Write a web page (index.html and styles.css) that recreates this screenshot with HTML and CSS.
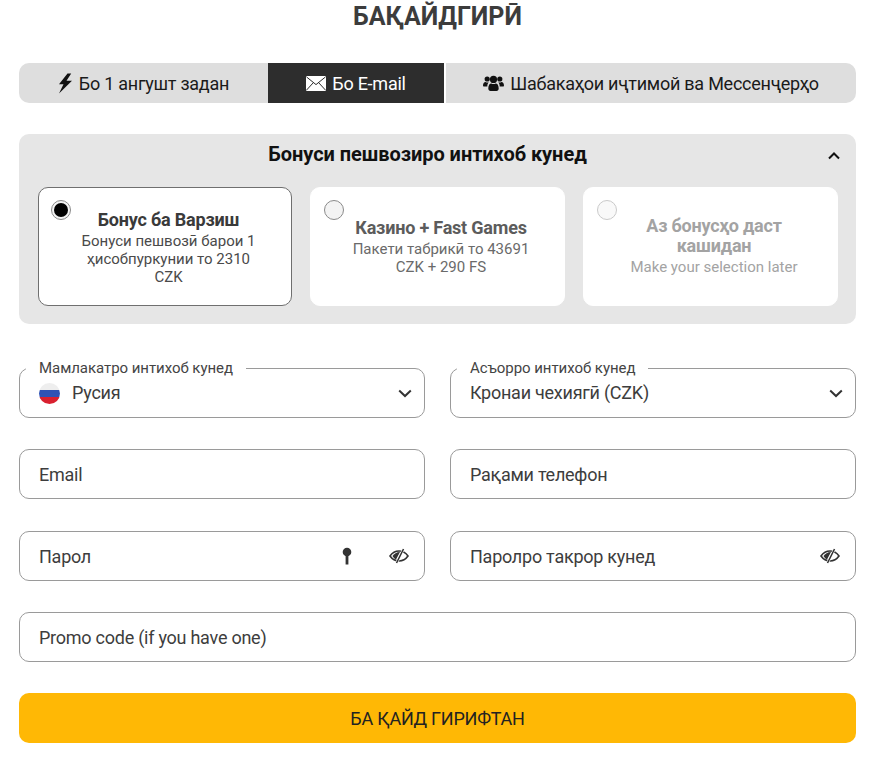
FILE: index.html
```html
<!DOCTYPE html>
<html lang="tg">
<head>
<meta charset="utf-8">
<title>Бақайдгирӣ</title>
<link rel="stylesheet" href="styles.css">
</head>
<body>
<main class="page">
  <h1 class="title">БАҚАЙДГИРӢ</h1>
  <nav class="tabs">
    <div class="tab tab-one">
      <svg class="ico" width="15" height="21" viewBox="0 0 15 21"><path fill="#111" d="M9.500 0.500 1 11.200h4.500L1 20.500 14 7.800H8.500l4.700-7.300z"/></svg>
      <span>Бо 1 ангушт задан</span>
    </div>
    <div class="tab tab-mail">
      <svg class="ico" width="20" height="15" viewBox="0 0 20 15"><rect width="20" height="15" rx="1.2" fill="#fff"/><path d="M.6 1 10 8.6 19.4 1M.6 14 7.4 6.6M19.4 14 12.6 6.6" fill="none" stroke="#2d2d2d" stroke-width="1"/></svg>
      <span>Бо E-mail</span>
    </div>
    <div class="tab tab-social">
      <svg class="ico" width="21" height="17" viewBox="0 0 21 17"><g fill="#111"><circle cx="4.2" cy="4" r="2.6"/><circle cx="16.8" cy="4" r="2.6"/><circle cx="10.5" cy="4.4" r="3.6"/><path d="M0 11c0-2.6 1-4 2.6-4 1 .6 2.2.6 3.2.3-.9 1-1.500 2.200-1.500 4.200H.8c-.5 0-.8-.2-.8-.5zM21 11c0-2.600-1-4-2.600-4-1 .6-2.200.6-3.200.3.9 1 1.500 2.200 1.500 4.200h3.500c.5 0 .8-.2.8-.5z"/><path d="M5.300 13.600c0-3.300 1.200-5.200 3-5.200 1.400.9 3 .9 4.400 0 1.800 0 3 1.900 3 5.200 0 1.400-.9 2.400-2.200 2.400h-6c-1.300 0-2.200-1-2.200-2.400z"/></g></svg>
      <span>Шабакаҳои иҷтимой ва Мессенҷерҳо</span>
    </div>
  </nav>

  <section class="bonus">
    <header class="bonus-head">
      <h2 class="bonus-title">Бонуси пешвозиро интихоб кунед</h2>
      <svg class="bonus-toggle" width="12" height="8" viewBox="0 0 12 8"><path d="M1 6.500 6 1.500l5 5" fill="none" stroke="#111" stroke-width="2"/></svg>
    </header>
    <div class="cards">
      <article class="card card-active">
        <span class="radio radio-on"></span>
        <h3 class="card-title">Бонус ба Варзиш</h3>
        <p class="card-text">Бонуси пешвозӣ барои 1 ҳисобпуркунии то 2310 CZK</p>
      </article>
      <article class="card card-mid">
        <span class="radio"></span>
        <h3 class="card-title">Казино + Fast Games</h3>
        <p class="card-text">Пакети табрикӣ то 43691 CZK + 290 FS</p>
      </article>
      <article class="card card-later">
        <span class="radio"></span>
        <h3 class="card-title">Аз бонусҳо даст кашидан</h3>
        <p class="card-text">Make your selection later</p>
      </article>
    </div>
  </section>

  <form class="form">
    <div class="field field-select">
      <span class="legend">Мамлакатро интихоб кунед</span>
      <span class="flag"></span>
      <span class="value">Русия</span>
      <svg class="chev" width="14" height="9" viewBox="0 0 14 9"><path d="M1.200 1.500 7 7l5.800-5.500" fill="none" stroke="#333" stroke-width="2"/></svg>
    </div>
    <div class="field field-select">
      <span class="legend">Асъорро интихоб кунед</span>
      <span class="value">Кронаи чехиягӣ (CZK)</span>
      <svg class="chev" width="14" height="9" viewBox="0 0 14 9"><path d="M1.200 1.500 7 7l5.800-5.500" fill="none" stroke="#333" stroke-width="2"/></svg>
    </div>
    <div class="field"><span class="value">Email</span></div>
    <div class="field"><span class="value">Рақами телефон</span></div>
    <div class="field field-low">
      <span class="value">Парол</span>
      <svg class="key" width="10" height="18" viewBox="0 0 10 18"><circle cx="5" cy="5" r="4.300" fill="#333"/><rect x="3.600" y="7" width="2.800" height="10.500" fill="#333"/></svg>
      <svg class="eye" width="20" height="16" viewBox="0 0 20 16"><path d="M1 8c2.400-3.400 5.400-5 9-5s6.600 1.600 9 5c-2.400 3.400-5.400 5-9 5S3.400 11.400 1 8z" fill="none" stroke="#333" stroke-width="1.600"/><path d="M3.500 8c1.700-2.400 4-3.800 7.500-4L7 11.500C5.500 10.800 4.400 9.600 3.500 8z" fill="#333"/><path d="M14.500 1 7.500 15" stroke="#fff" stroke-width="2.600"/><path d="M14.500 1 7.500 15" stroke="#333" stroke-width="1.600"/></svg>
    </div>
    <div class="field field-low">
      <span class="value">Паролро такрор кунед</span>
      <svg class="eye" width="20" height="16" viewBox="0 0 20 16"><path d="M1 8c2.400-3.400 5.400-5 9-5s6.600 1.600 9 5c-2.400 3.400-5.400 5-9 5S3.400 11.400 1 8z" fill="none" stroke="#333" stroke-width="1.600"/><path d="M3.500 8c1.700-2.400 4-3.800 7.500-4L7 11.500C5.500 10.800 4.400 9.600 3.500 8z" fill="#333"/><path d="M14.500 1 7.500 15" stroke="#fff" stroke-width="2.600"/><path d="M14.500 1 7.500 15" stroke="#333" stroke-width="1.600"/></svg>
    </div>
    <div class="field field-wide field-low"><span class="value">Promo code (if you have one)</span></div>
    <button class="submit" type="button">БА ҚАЙД ГИРИФТАН</button>
  </form>
</main>
</body>
</html>
```

FILE: styles.css
```css
* { box-sizing: border-box; }
html, body { margin: 0; background: #fff; }
body { font-family: Roboto, "Liberation Sans", sans-serif; color: #333; }
.page { width: 837px; margin-left: 19px; }

.title {
  margin: 0;
  height: 63px;
  padding-top: 2px;
  font-size: 25px;
  line-height: 30px;
  font-weight: 700;
  text-align: center;
  color: #3c3c3c;
}

.tabs { display: flex; height: 40px; }
.tab {
  display: flex;
  align-items: center;
  justify-content: center;
  gap: 6px;
  background: #dedede;
  color: #1a1a1a;
  font-size: 18px;
  letter-spacing: -0.25px;
}
.tab-one { width: 249px; border-radius: 10px 0 0 10px; }
.tab-mail { width: 176px; background: #2d2d2d; color: #fff; }
.tab-social { width: 410px; margin-left: 2px; border-radius: 0 10px 10px 0; }
.ico { flex: none; }

.bonus {
  margin-top: 31px;
  height: 190px;
  padding: 0 18px 0 19px;
  background: #e6e6e6;
  border-radius: 10px;
}
.bonus-head { position: relative; height: 53px; padding: 8px 21px 0 0; }
.bonus-title {
  margin: 0;
  font-size: 20px;
  line-height: 24px;
  font-weight: 700;
  letter-spacing: -0.05px;
  text-align: center;
  color: #111;
}
.bonus-toggle { position: absolute; right: -2px; top: 18px; }

.cards { display: grid; grid-template-columns: 254px 255px 255px; gap: 18px; }
.card {
  position: relative;
  height: 119px;
  padding: 22px 14px 0 21px;
  background: #fff;
  border: 1px solid #fff;
  border-radius: 10px;
  text-align: center;
  display: flex;
  flex-direction: column;
  align-items: center;
}
.card-active { border-color: #6f6f6f; }
.card-title {
  margin: 0 0 2px;
  max-width: 190px;
  font-size: 18px;
  line-height: 20px;
  font-weight: 700;
  letter-spacing: -0.2px;
  color: #3a3a3a;
}
.card-text {
  margin: 0;
  width: 190px;
  font-size: 15px;
  line-height: 18px;
  color: #4a4a4a;
}
.card-mid { padding-top: 30px; }
.card-mid .card-title { color: #5c5c5c; }
.card-mid .card-text { color: #6a6a6a; }
.card-later { padding-top: 28px; }
.card-later .card-title { color: #a3a3a3; }
.card-later .card-text { color: #a3a3a3; }
.card-later .radio { opacity: .45; }

.radio {
  position: absolute;
  left: 13px;
  top: 12px;
  width: 20px;
  height: 20px;
  border: 1px solid #8a8a8a;
  border-radius: 50%;
  background: #f3f3f3;
}
.radio-on { left: 12px; }
.radio-on::after {
  content: "";
  position: absolute;
  left: 2px;
  top: 2px;
  width: 14px;
  height: 14px;
  border-radius: 50%;
  background: #000;
}

.form {
  margin-top: 44px;
  display: grid;
  grid-template-columns: 406px 406px;
  column-gap: 25px;
  row-gap: 31.250px;
}
.field {
  position: relative;
  height: 50px;
  display: flex;
  align-items: center;
  padding: 0 19px;
  border: 1px solid #9a9a9a;
  border-radius: 10px;
  background: #fff;
}
.field-wide { grid-column: 1 / -1; }
.value { flex: 1; font-size: 18px; letter-spacing: -0.25px; color: #3d3d3d; }
.field-select .value { margin-bottom: 2px; }
.field-low .value { margin-top: 2px; }
.legend {
  position: absolute;
  left: 6px;
  top: -9px;
  padding: 0 13px;
  background: #fff;
  font-size: 15px;
  line-height: 17px;
  letter-spacing: -0.05px;
  color: #444;
}
.flag {
  flex: none;
  width: 21px;
  height: 21px;
  margin-right: 12px;
  border-radius: 50%;
  background: linear-gradient(#eeeeee 0 33%, #2f52b5 33% 66%, #d9202f 66%);
}
.chev { flex: none; margin-right: -7px; }
.key { flex: none; margin-right: 37px; }
.eye { flex: none; margin-right: -4px; }

.submit {
  grid-column: 1 / -1;
  height: 50px;
  border: 0;
  border-radius: 10px;
  background: #ffb805;
  color: #222;
  font-family: inherit;
  font-size: 18px;
  letter-spacing: -0.25px;
}
```
